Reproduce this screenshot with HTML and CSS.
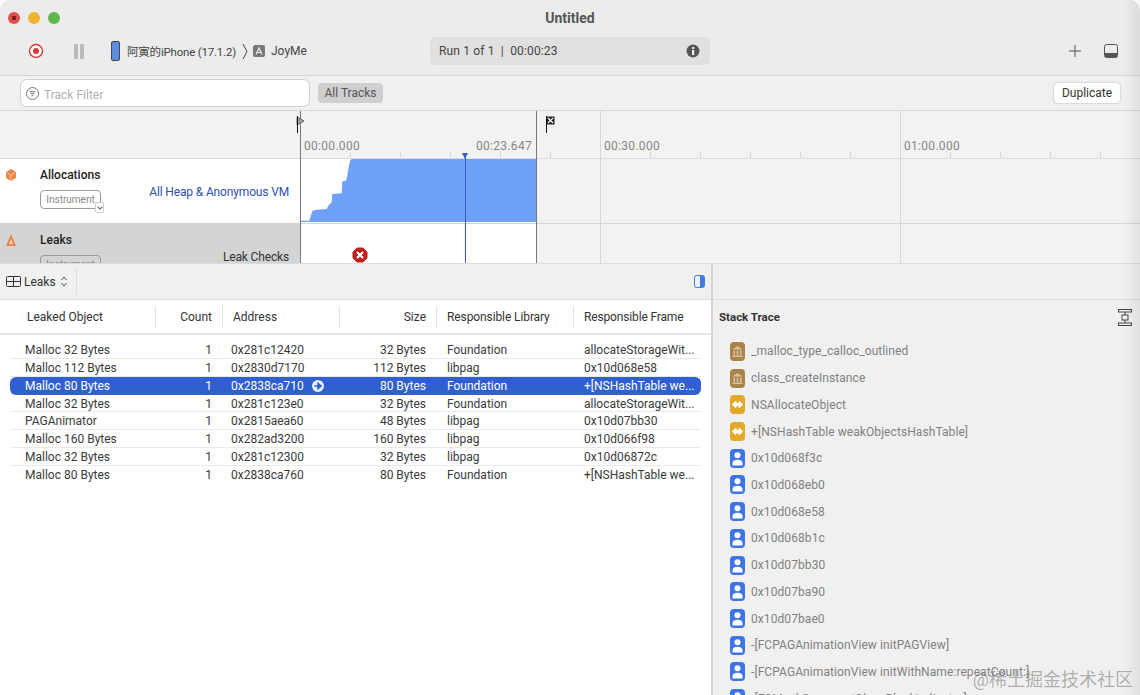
FILE: index.html
```html
<!DOCTYPE html>
<html lang="en">
<head>
  <meta charset="UTF-8">
  <title>Untitled</title>
  <link rel="stylesheet" href="styles.css">
</head>
<body>
  <!-- Stack frame icons -->
  <svg class="defs">
    <symbol id="sym-lib" viewBox="0 0 15 19">
      <rect width="15" height="19" rx="4" fill="#ab8247"/>
      <path d="M7.5 4 L12.5 7.5 H2.5 Z" fill="#d8c4a2"/>
      <path d="M3.5 8.5 H5 V13 H3.5 Z M6.75 8.5 H8.25 V13 H6.75 Z M10 8.5 H11.5 V13 H10 Z" fill="#d8c4a2"/>
      <rect x="2.5" y="13.5" width="10" height="1.5" fill="#d8c4a2"/>
    </symbol>
    <symbol id="sym-fw" viewBox="0 0 15 19">
      <rect width="15" height="19" rx="4" fill="#e3a729"/>
      <path d="M2 9.5 L5 6.3 H6.5 V8 H8.5 V6.3 H10 L13 9.5 L10 12.7 H8.5 V11 H6.5 V12.7 H5 Z" fill="#fff"/>
    </symbol>
    <symbol id="sym-user" viewBox="0 0 15 19">
      <rect width="15" height="19" rx="4" fill="#3d75e6"/>
      <circle cx="7.5" cy="6.3" r="3" fill="#fff"/>
      <path d="M2.5 16.5 V14.5 Q2.5 10.8 7.5 10.8 Q12.5 10.8 12.5 14.5 V16.5 Z" fill="#fff"/>
    </symbol>
  </svg>

  <div class="window">
    <!-- Title and toolbar -->
    <header class="toolbar">
      <div class="title-row">
        <div class="traffic">
          <span class="light light-red"></span>
          <span class="light light-yellow"></span>
          <span class="light light-green"></span>
        </div>
        <div class="title">Untitled</div>
      </div>
      <div class="control-row">
        <svg class="record-btn" width="16" height="16" viewBox="0 0 16 16"><circle cx="8" cy="8" r="6.5" fill="#fff" stroke="#d8383a" stroke-width="1.4"/><circle cx="8" cy="8" r="3" fill="#d8383a"/></svg>
        <svg class="pause-btn" width="10" height="15" viewBox="0 0 10 15"><rect x="0" y="0" width="4" height="15" rx="1" fill="#b9b9b9"/><rect x="6" y="0" width="4" height="15" rx="1" fill="#b9b9b9"/></svg>
        <svg class="phone-icon" width="9" height="20" viewBox="0 0 9 20"><rect x="0.5" y="0.5" width="8" height="19" rx="1.5" fill="#5b8fdc" stroke="#3c4a5c"/></svg>
        <span class="device">阿寅的iPhone (17.1.2)</span>
        <svg class="crumb" width="6" height="17" viewBox="0 0 6 17"><path d="M1 1 L5 8.5 L1 16" fill="none" stroke="#444" stroke-width="1"/></svg>
        <svg class="app-icon" width="12" height="12" viewBox="0 0 12 12"><rect width="12" height="12" rx="2" fill="#77787a"/><path d="M3 9.5 L6 3 L9 9.5 M4 7.5 H8" fill="none" stroke="#e8e8e8" stroke-width="1.2"/></svg>
        <span class="app-name">JoyMe</span>
        <div class="run-pill">
          <span>Run 1 of 1&nbsp; |&nbsp; 00:00:23</span>
          <svg width="14" height="14" viewBox="0 0 14 14"><circle cx="7" cy="7" r="6.5" fill="#555"/><rect x="6" y="6" width="2.2" height="5" fill="#eee"/><rect x="6" y="3" width="2.2" height="2" fill="#eee"/></svg>
        </div>
        <svg class="plus-btn" width="12" height="12" viewBox="0 0 12 12"><path d="M6 0 V12 M0 6 H12" stroke="#555" stroke-width="1"/></svg>
        <svg class="panel-btn" width="14" height="14" viewBox="0 0 14 14"><rect x="0.5" y="0.5" width="13" height="13" rx="2" fill="none" stroke="#555"/><rect x="1" y="9" width="12" height="4" fill="#555"/></svg>
      </div>
    </header>

    <!-- Track filter -->
    <div class="filter-bar">
      <div class="filter-input">
        <svg width="13" height="13" viewBox="0 0 13 13"><circle cx="6.5" cy="6.5" r="6" fill="none" stroke="#777"/><path d="M3.5 4.7 H9.5 M4.5 6.7 H8.5 M5.5 8.7 H7.5" stroke="#777"/></svg>
        <span>Track Filter</span>
      </div>
      <button class="all-tracks">All Tracks</button>
      <button class="duplicate">Duplicate</button>
    </div>

    <!-- Timeline -->
    <div class="timeline">
      <div class="ruler">
        <div class="ruler-side"></div>
        <div class="ruler-scale"></div>
      </div>
      <div class="track">
        <div class="track-head">
          <svg class="track-icon" width="10" height="12" viewBox="0 0 10 12"><path d="M5 0 L10 3 V9 L5 12 L0 9 V3 Z" fill="#e8864a"/><path d="M0.5 3.5 L5 6 L9.5 3.5 M5 6 V12" fill="none" stroke="#f8cfae" stroke-width="0.8"/></svg>
          <div class="track-name">
            <div>Allocations</div>
            <div class="badge">Instrument<span class="badge-arrow"></span></div>
          </div>
          <div class="track-desc track-desc-blue">All Heap &amp; Anonymous VM</div>
        </div>
        <div class="graph">
          <svg width="235" height="63" viewBox="0 0 235 63" preserveAspectRatio="none"><path d="M0 61.7 H8.3 L9.7 56.7 L11.7 51.7 L15.7 50.7 L25.7 50 L27.3 46.7 L30.7 43.3 L31.3 35 L40.7 34.3 L41.3 22.3 L45 21.7 L46.3 16.7 L47.3 10 L49 1.7 L50.7 0 H235 V63 H0 Z" fill="#6fa1f7"/></svg>
        </div>
        <div class="track-rest"></div>
      </div>
      <div class="track track-leaks">
        <div class="track-head">
          <svg class="track-icon" width="10" height="12" viewBox="0 0 10 12"><path d="M5 0 L10 12 H0 Z" fill="#e8864a"/><path d="M5 5 L7 10 H3 Z" fill="#f3d9c3"/></svg>
          <div class="track-name">
            <div>Leaks</div>
            <div class="badge">Instrument</div>
          </div>
          <div class="track-desc">Leak Checks</div>
        </div>
        <div class="graph graph-empty"></div>
        <div class="track-rest"></div>
      </div>

      <!-- things laid over the ruler and tracks -->
      <span class="time-label time-0">00:00.000</span>
      <span class="time-label time-now">00:23.647</span>
      <span class="time-label time-30">00:30.000</span>
      <span class="time-label time-60">01:00.000</span>
      <i class="line line-start"></i>
      <i class="line line-end"></i>
      <i class="line line-30"></i>
      <i class="line line-60"></i>
      <i class="playhead"></i>
      <svg class="flag flag-start" width="9" height="17" viewBox="0 0 9 17"><path d="M1 1 L8 5 L1 9 Z" fill="#a0a0a0" stroke="#666"/><path d="M1.5 0 V17" stroke="#111"/></svg>
      <svg class="flag flag-stop" width="9" height="17" viewBox="0 0 9 17"><rect x="0.5" y="0.5" width="8" height="8" fill="#222"/><path d="M2 2 L7 7 M7 2 L2 7" stroke="#fff" stroke-width="1.2"/><path d="M0.5 0 V17" stroke="#111"/></svg>
      <svg class="leak-mark" width="16" height="16" viewBox="0 0 16 16"><path d="M5 1 H11 L15 5 V11 L11 15 H5 L1 11 V5 Z" fill="#bd1e1e" stroke="#bd1e1e" stroke-linejoin="round"/><path d="M5 5 L11 11 M11 5 L5 11" stroke="#fff" stroke-width="2.2"/></svg>
    </div>

    <!-- Detail bar -->
    <div class="detail-bar">
      <div class="detail-left">
        <svg width="15" height="11" viewBox="0 0 15 11"><rect x="0.5" y="0.5" width="14" height="10" rx="1" fill="none" stroke="#333"/><path d="M0.5 5.5 H14.5 M7.5 0.5 V10.5" stroke="#333"/></svg>
        <span>Leaks</span>
        <svg width="6" height="11" viewBox="0 0 6 11"><path d="M0.5 4 L3 1 L5.5 4 M0.5 7 L3 10 L5.5 7" fill="none" stroke="#555"/></svg>
        <i class="detail-sep"></i>
        <svg class="sidebar-toggle" width="11" height="13" viewBox="0 0 11 13"><rect x="0.5" y="0.5" width="10" height="12" rx="2" fill="none" stroke="#3f7be0"/><rect x="6" y="1" width="4" height="11" fill="#3f7be0"/></svg>
      </div>
      <div class="detail-right"></div>
    </div>

    <div class="panes">
      <!-- Leaks table -->
      <section class="leaks">
        <div class="leaks-head">
          <div class="th th-object">Leaked Object</div>
          <div class="th th-count">Count</div>
          <div class="th th-address">Address</div>
          <div class="th th-size">Size</div>
          <div class="th th-library">Responsible Library</div>
          <div class="th th-frame">Responsible Frame</div>
        </div>
        <div class="leaks-body">
          <div class="row"><span>Malloc 32 Bytes</span><span class="num">1</span><span class="addr">0x281c12420</span><span class="num">32 Bytes</span><span class="lib">Foundation</span><span>allocateStorageWit...</span></div>
          <div class="row"><span>Malloc 112 Bytes</span><span class="num">1</span><span class="addr">0x2830d7170</span><span class="num">112 Bytes</span><span class="lib">libpag</span><span>0x10d068e58</span></div>
          <div class="row row-selected"><span>Malloc 80 Bytes</span><span class="num">1</span><span class="addr">0x2838ca710<svg class="go" width="12" height="12" viewBox="0 0 12 12"><circle cx="6" cy="6" r="6" fill="#e8eefb"/><path d="M2.5 6 H7 M6 3.2 L9.2 6 L6 8.8 Z" stroke="#2f5fd0" stroke-width="1.4" fill="#2f5fd0"/></svg></span><span class="num">80 Bytes</span><span class="lib">Foundation</span><span>+[NSHashTable we...</span></div>
          <div class="row"><span>Malloc 32 Bytes</span><span class="num">1</span><span class="addr">0x281c123e0</span><span class="num">32 Bytes</span><span class="lib">Foundation</span><span>allocateStorageWit...</span></div>
          <div class="row"><span>PAGAnimator</span><span class="num">1</span><span class="addr">0x2815aea60</span><span class="num">48 Bytes</span><span class="lib">libpag</span><span>0x10d07bb30</span></div>
          <div class="row"><span>Malloc 160 Bytes</span><span class="num">1</span><span class="addr">0x282ad3200</span><span class="num">160 Bytes</span><span class="lib">libpag</span><span>0x10d066f98</span></div>
          <div class="row"><span>Malloc 32 Bytes</span><span class="num">1</span><span class="addr">0x281c12300</span><span class="num">32 Bytes</span><span class="lib">libpag</span><span>0x10d06872c</span></div>
          <div class="row"><span>Malloc 80 Bytes</span><span class="num">1</span><span class="addr">0x2838ca760</span><span class="num">80 Bytes</span><span class="lib">Foundation</span><span>+[NSHashTable we...</span></div>
        </div>
      </section>

      <!-- Stack trace -->
      <aside class="stack">
        <div class="stack-head">
          <span>Stack Trace</span>
          <svg width="14" height="17" viewBox="0 0 14 17"><rect x="0.5" y="0.5" width="13" height="2.5" fill="none" stroke="#444"/><rect x="4" y="6" width="6" height="5" fill="none" stroke="#444"/><rect x="0.5" y="14" width="13" height="2.5" fill="none" stroke="#444"/><path d="M7 3 V6 M7 11 V14" stroke="#444"/></svg>
        </div>
        <ul class="frames">
          <li><svg class="sym"><use href="#sym-lib"/></svg>_malloc_type_calloc_outlined</li>
          <li><svg class="sym"><use href="#sym-lib"/></svg>class_createInstance</li>
          <li><svg class="sym"><use href="#sym-fw"/></svg>NSAllocateObject</li>
          <li><svg class="sym"><use href="#sym-fw"/></svg>+[NSHashTable weakObjectsHashTable]</li>
          <li><svg class="sym"><use href="#sym-user"/></svg>0x10d068f3c</li>
          <li><svg class="sym"><use href="#sym-user"/></svg>0x10d068eb0</li>
          <li><svg class="sym"><use href="#sym-user"/></svg>0x10d068e58</li>
          <li><svg class="sym"><use href="#sym-user"/></svg>0x10d068b1c</li>
          <li><svg class="sym"><use href="#sym-user"/></svg>0x10d07bb30</li>
          <li><svg class="sym"><use href="#sym-user"/></svg>0x10d07ba90</li>
          <li><svg class="sym"><use href="#sym-user"/></svg>0x10d07bae0</li>
          <li><svg class="sym"><use href="#sym-user"/></svg>-[FCPAGAnimationView initPAGView]</li>
          <li><svg class="sym"><use href="#sym-user"/></svg>-[FCPAGAnimationView initWithName:repeatCount:]</li>
          <li><svg class="sym"><use href="#sym-user"/></svg>-[FCMaskCommentCloseBlockIndicator]</li>
        </ul>
      </aside>
    </div>

    <div class="watermark">@稀土掘金技术社区</div>
  </div>
</body>
</html>
```

FILE: styles.css
```css
* {
  box-sizing: border-box;
}

html, body {
  margin: 0;
  height: 100%;
  background: #fbfbfb;
}

body {
  font-family: Roboto, "Noto Sans CJK SC", sans-serif;
  font-size: 12px;
  color: #333;
  overflow: hidden;
}

.defs {
  display: none;
}

.window {
  position: relative;
  width: 1140px;
  height: 695px;
  display: flex;
  flex-direction: column;
  background: #f0f0f0;
  border-radius: 10px 10px 0 0;
  overflow: hidden;
}

/* soft shadow on the right edge */
.window::after {
  content: "";
  position: absolute;
  top: 0;
  right: 0;
  bottom: 0;
  width: 16px;
  background: linear-gradient(to right, transparent, rgba(0, 0, 0, 0.07));
  pointer-events: none;
}

/* Toolbar */
.toolbar {
  height: 76px;
  flex: none;
  background: #ececec;
  border-bottom: 1px solid #d4d4d4;
}

.title-row {
  height: 35px;
  display: flex;
  align-items: center;
  position: relative;
}

.traffic {
  display: flex;
  gap: 8px;
  padding-left: 8px;
}

.light {
  width: 12px;
  height: 12px;
  border-radius: 50%;
}

.light-red {
  background: radial-gradient(circle, #7c1c1c 0 2px, #e0504a 2.5px);
}

.light-yellow {
  background: #f0b32e;
}

.light-green {
  background: #5cb94a;
}

.title {
  position: absolute;
  left: 0;
  right: 0;
  text-align: center;
  font-size: 14px;
  font-weight: 700;
  color: #555;
}

.control-row {
  height: 32px;
  display: flex;
  align-items: center;
  color: #444;
}

.record-btn {
  margin-left: 28px;
}

.pause-btn {
  margin-left: 30px;
}

.phone-icon {
  margin-left: 27px;
}

.device {
  margin-left: 7px;
  font-size: 11.5px;
  letter-spacing: -0.2px;
  width: 109px;
  white-space: nowrap;
}

.crumb {
  margin-left: 6px;
}

.app-icon {
  margin-left: 5px;
}

.app-name {
  margin-left: 6px;
  width: 159px;
}

.run-pill {
  width: 280px;
  height: 28px;
  display: flex;
  align-items: center;
  justify-content: space-between;
  padding: 0 10px 0 9px;
  background: #e0e0e0;
  border-radius: 5px;
  letter-spacing: 0.15px;
}

.plus-btn {
  margin-left: 359px;
}

.panel-btn {
  margin-left: 23px;
}

/* Filter bar */
.filter-bar {
  height: 35px;
  flex: none;
  display: flex;
  align-items: center;
  background: #f0f0f0;
  border-bottom: 1px solid #d8d8d8;
}

.filter-input {
  width: 290px;
  height: 28px;
  margin-left: 20px;
  padding-left: 5px;
  display: flex;
  align-items: center;
  gap: 5px;
  background: #fff;
  border: 1px solid #cfcfcf;
  border-radius: 7px;
  color: #b0b0b0;
}

.filter-input span {
  padding-top: 3px;
}

.all-tracks,
.duplicate {
  font: inherit;
  height: 20px;
  padding: 0;
  border: 0;
  border-radius: 4px;
}

.all-tracks {
  width: 65px;
  margin-left: 8px;
  background: #cfcfcf;
  color: #555;
}

.duplicate {
  width: 66px;
  margin-left: 671px;
  background: #fff;
  color: #333;
  box-shadow: 0 0 2px rgba(0, 0, 0, 0.35);
}

/* Timeline */
.timeline {
  position: relative;
  height: 152px;
  flex: none;
  overflow: hidden;
  background: #f2f2f2;
}

.ruler {
  height: 48px;
  display: flex;
  border-bottom: 1px solid #dcdcdc;
}

.ruler-side {
  width: 300px;
}

.ruler-scale {
  flex: 1;
  background: repeating-linear-gradient(to right, #d6d6d6 0 1px, transparent 1px 50px) left bottom / 100% 6px no-repeat;
}

.track {
  height: 65px;
  display: flex;
  border-bottom: 1px solid #d4d4d4;
}

.track-head {
  width: 300px;
  display: flex;
  background: #fff;
  position: relative;
  padding: 9px 11px 0 6px;
}

.track-leaks .track-head {
  background: #d4d4d4;
}

.track-icon {
  margin-top: 1px;
}

.track-name {
  margin-left: 24px;
  font-weight: 500;
  color: #222;
  line-height: 14px;
}

.badge {
  position: relative;
  width: 61px;
  height: 19px;
  margin-top: 8px;
  border: 1px solid #999;
  border-radius: 4px;
  font-size: 10px;
  font-weight: 400;
  line-height: 17px;
  text-align: center;
  color: #888;
  background: #fff;
}

.track-leaks .badge {
  background: transparent;
}

.badge-arrow {
  position: absolute;
  right: -4px;
  bottom: -5px;
  width: 9px;
  height: 11px;
  background: #fff;
  border: 1px solid #ccc;
  border-radius: 2px;
}

.badge-arrow::after {
  content: "";
  position: absolute;
  left: 2px;
  top: 2px;
  width: 3px;
  height: 3px;
  border-right: 1px solid #666;
  border-bottom: 1px solid #666;
  transform: rotate(45deg);
}

.track-desc {
  margin-left: auto;
  margin-top: 17px;
  color: #333;
  letter-spacing: -0.15px;
}

.track-desc-blue {
  color: #2c4fb0;
}

.graph {
  width: 236px;
  padding: 0 0 0 1px;
  background: #fff;
}

.graph svg {
  display: block;
}

.track-rest {
  flex: 1;
}

.time-label {
  position: absolute;
  top: 28px;
  font-size: 12px;
  letter-spacing: 0.3px;
  color: #858585;
}

.time-0 { left: 304px; }
.time-now { right: 608px; }
.time-30 { left: 604px; }
.time-60 { left: 904px; }

.line {
  position: absolute;
  top: 0;
  bottom: 0;
  width: 1px;
  background: #d6d6d6;
}

.line-start { left: 300px; background: #777; }
.line-end { left: 536px; background: #777; }
.line-30 { left: 600px; }
.line-60 { left: 900px; }

.playhead {
  position: absolute;
  left: 465px;
  top: 42px;
  bottom: 0;
  width: 1px;
  background: #2f5cc4;
}

.playhead::before {
  content: "";
  position: absolute;
  left: -3px;
  top: 0;
  border-left: 3.5px solid transparent;
  border-right: 3.5px solid transparent;
  border-top: 6px solid #2f5cc4;
}

.flag {
  position: absolute;
  top: 5px;
}

.flag-start { left: 296px; }
.flag-stop { left: 546px; }

.leak-mark {
  position: absolute;
  left: 352px;
  top: 136px;
}

/* Detail bar */
.detail-bar {
  height: 37px;
  flex: none;
  display: flex;
  border-top: 1px solid #dcdcdc;
  border-bottom: 1px solid #dcdcdc;
}

.detail-left {
  width: 713px;
  display: flex;
  align-items: center;
  padding-left: 6px;
  color: #333;
  border-right: 2px solid #d4d4d4;
}

.detail-left span {
  margin-left: 3px;
  margin-right: 5px;
}

.detail-sep {
  width: 1px;
  height: 26px;
  margin-left: 9px;
  background: #dcdcdc;
}

.sidebar-toggle {
  margin-left: 617px;
}

.detail-right {
  flex: 1;
}

/* Panes */
.panes {
  flex: 1;
  display: flex;
  min-height: 0;
}

.leaks {
  width: 713px;
  background: #fff;
  border-right: 2px solid #d4d4d4;
}

.leaks-head {
  height: 35px;
  display: flex;
  align-items: center;
  border-bottom: 2px solid #e6e6e6;
  color: #333;
}

.th {
  height: 22px;
  line-height: 22px;
  padding-left: 10px;
  border-right: 1px solid #e2e2e2;
}

.th-object { width: 156px; padding-left: 27px; }
.th-count { width: 67px; padding: 0 10px 0 0; text-align: right; }
.th-address { width: 117px; }
.th-size { width: 97px; padding: 0 10px 0 0; text-align: right; }
.th-library { width: 137px; letter-spacing: -0.1px; }
.th-frame { flex: 1; border-right: 0; letter-spacing: -0.15px; }

.leaks-body {
  padding: 6px 10px 0 10px;
}

.row {
  height: 17.86px;
  display: grid;
  grid-template-columns: 130px 57px 130px 84px 158px 1fr;
  align-items: center;
  padding-left: 15px;
  color: #3a3a3a;
  white-space: nowrap;
  box-shadow: inset 0 -1px 0 #e9e9e9;
}

.row:last-child {
  box-shadow: none;
}

.row-selected {
  background: #2f5fd0;
  color: #fff;
  border-radius: 6px;
  box-shadow: none;
}

.num {
  text-align: right;
}

.addr {
  display: flex;
  align-items: center;
  padding-left: 19px;
}

.lib {
  padding-left: 21px;
}

.go {
  margin-left: 8px;
}

/* Stack trace */
.stack {
  flex: 1;
  min-width: 0;
}

.stack-head {
  height: 34px;
  display: flex;
  align-items: center;
  justify-content: space-between;
  padding: 0 8px 0 6px;
  font-size: 11.5px;
  font-weight: 700;
  color: #333;
}

.frames {
  list-style: none;
  margin: 4px 0 0;
  padding: 0 0 0 17px;
  color: #808080;
  letter-spacing: 0.08px;
}

.frames li {
  height: 26.72px;
  display: flex;
  align-items: center;
  gap: 6px;
  white-space: nowrap;
}

.sym {
  width: 15px;
  height: 19px;
  flex: none;
}

.watermark {
  position: absolute;
  right: 7px;
  bottom: 4px;
  font-size: 18px;
  color: rgba(90, 90, 90, 0.45);
  white-space: nowrap;
}
```
